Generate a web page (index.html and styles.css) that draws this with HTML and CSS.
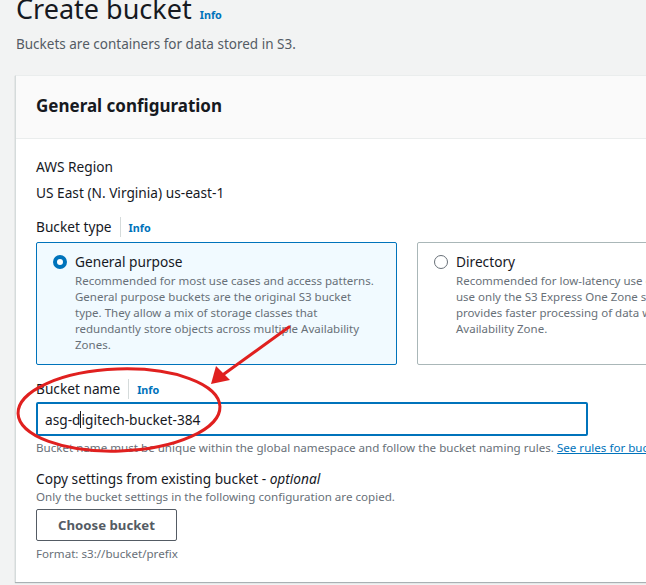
FILE: index.html
```html
<!DOCTYPE html>
<html lang="en">
<head>
<meta charset="utf-8">
<title>Create bucket</title>
<link rel="stylesheet" href="styles.css">
</head>
<body>
<div class="page">
  <header class="head">
    <h1 class="title">Create bucket</h1>
    <a class="info info-title">Info</a>
  </header>
  <p class="sub">Buckets are containers for data stored in S3.</p>

  <section class="card">
    <div class="card-head"><h2 class="card-title">General configuration</h2></div>
    <div class="card-body">
      <div class="field region">
        <div class="label">AWS Region</div>
        <div class="value">US East (N. Virginia) us-east-1</div>
      </div>

      <div class="field type">
        <div class="label-row"><span class="label">Bucket type</span><span class="sep"></span><a class="info">Info</a></div>
        <div class="tiles">
          <div class="tile selected">
            <span class="radio on"></span>
            <div class="tile-text">
              <div class="tile-title">General purpose</div>
              <div class="tile-desc">Recommended for most use cases and access patterns. General purpose buckets are the original S3 bucket type. They allow a mix of storage classes that redundantly store objects across multiple Availability Zones.</div>
            </div>
          </div>
          <div class="tile">
            <span class="radio"></span>
            <div class="tile-text">
              <div class="tile-title">Directory</div>
              <div class="tile-desc">Recommended for low-latency use cases. These buckets use only the S3 Express One Zone storage class, which provides faster processing of data within a single Availability Zone.</div>
            </div>
          </div>
        </div>
      </div>

      <div class="field name">
        <div class="label-row"><span class="label">Bucket name</span><span class="sep"></span><a class="info">Info</a></div>
        <div class="input"><span>asg-d</span><span class="caret"></span><span>igitech-bucket-384</span></div>
        <div class="hint">Bucket name must be unique within the global namespace and follow the bucket naming rules. <a class="link">See rules for bucket naming</a></div>
      </div>

      <div class="field copy">
        <div class="label">Copy settings from existing bucket - <i>optional</i></div>
        <div class="hint">Only the bucket settings in the following configuration are copied.</div>
        <button class="btn">Choose bucket</button>
        <div class="hint fmt">Format: s3://bucket/prefix</div>
      </div>
    </div>
  </section>

  <svg class="annot" width="646" height="585" viewBox="0 0 646 585">
    <ellipse cx="119" cy="410" rx="101" ry="41" transform="rotate(-2 119 410)" fill="none" stroke="#e0201f" stroke-width="3"/>
    <line x1="289" y1="327" x2="224" y2="374" stroke="#e0201f" stroke-width="3" stroke-linecap="round"/>
    <polygon points="211,384 216,366 230,380" fill="#e0201f"/>
  </svg>
</div>
</body>
</html>
```

FILE: styles.css
```css
html, body {
  margin: 0;
  padding: 0;
}
body {
  background: #f2f3f3;
  font-family: "Noto Sans", "Open Sans", Arial, sans-serif;
  color: #16191f;
  overflow: hidden;
  width: 646px;
  height: 585px;
}
.page {
  position: relative;
  width: 646px;
  height: 585px;
  overflow: hidden;
}
.head {
  display: flex;
  align-items: baseline;
  gap: 8px;
  padding-left: 16px;
  margin-top: -11px;
  height: 40px;
}
.title {
  margin: 0;
  font-size: 27px;
  font-weight: 400;
  line-height: 40px;
  color: #16191f;
}
.info {
  color: #0073bb;
  font-weight: 700;
  font-size: 10.8px;
  text-decoration: none;
}
.info-title {
  font-size: 10.8px;
}
.sub {
  margin: 5px 0 0 16px;
  font-size: 13.5px;
  line-height: 20px;
  color: #545b64;
}
.card {
  margin: 21px 0 0 15px;
  width: 700px;
  background: #fff;
  border-left: 1px solid #d5dbdb;
  border-top: 1px solid #eaeded;
  box-shadow: 0 1px 1px rgba(0,28,36,.3);
}
.card-head {
  background: #fafafa;
  border-bottom: 1px solid #eaeded;
  height: 63px;
  box-sizing: border-box;
  padding-bottom: 2px;
  display: flex;
  align-items: center;
  padding-left: 20px;
}
.card-title {
  margin: 0;
  font-size: 17px;
  font-weight: 700;
  line-height: 22px;
}
.card-body {
  padding: 18px 20px 20px 20px;
  display: flex;
  flex-direction: column;
}
.label {
  font-size: 13.7px;
  line-height: 20px;
  color: #16191f;
}
.value {
  margin-top: 6px;
  font-size: 13.7px;
  line-height: 20px;
}
.type {
  margin-top: 14px;
}
.label-row {
  display: flex;
  align-items: center;
  height: 20px;
}
.sep {
  width: 1px;
  height: 20px;
  background: #d5dbdb;
  margin: 0 8px;
}
.tiles {
  margin-top: 5px;
  display: grid;
  grid-template-columns: 361px 361px;
  gap: 20px;
}
.tile {
  border: 1px solid #aab7b8;
  border-radius: 2px;
  background: #fff;
  display: flex;
  gap: 8px;
  padding: 8px 16px 11px 16px;
}
.tile.selected {
  border-color: #0073bb;
  background: #f1faff;
}
.radio {
  flex: none;
  width: 14px;
  height: 14px;
  margin-top: 4px;
  border-radius: 50%;
  box-sizing: border-box;
  border: 1.5px solid #687078;
  background: #fff;
}
.radio.on {
  border: 4px solid #0073bb;
  background: #fff;
}
.tile-title {
  font-size: 13.7px;
  line-height: 22px;
}
.tile-desc {
  font-size: 11.5px;
  line-height: 16px;
  color: #687078;
}
.name {
  margin-top: 14px;
}
.input {
  margin-top: 3px;
  width: 552px;
  height: 34px;
  box-sizing: border-box;
  border: 2px solid #0073bb;
  border-radius: 2px;
  padding-left: 7px;
  display: flex;
  align-items: center;
  font-size: 13.7px;
}
.caret {
  width: 1px;
  height: 17px;
  background: #16191f;
}
.hint {
  margin-top: 4px;
  font-size: 11.6px;
  line-height: 16px;
  color: #687078;
  white-space: nowrap;
}
.link {
  color: #0073bb;
  text-decoration: underline;
}
.copy {
  margin-top: 13px;
  display: flex;
  flex-direction: column;
}
.copy .hint {
  margin-top: 0;
}
.btn {
  align-self: flex-start;
  margin-top: 4px;
  width: 141px;
  height: 32px;
  border: 1px solid #545b64;
  border-radius: 2px;
  background: #fff;
  color: #545b64;
  font-family: inherit;
  font-size: 13.2px;
  font-weight: 700;
  padding: 0;
}
.copy .fmt {
  margin-top: 5px;
}
.annot {
  position: absolute;
  left: 0;
  top: 0;
  pointer-events: none;
}
```
